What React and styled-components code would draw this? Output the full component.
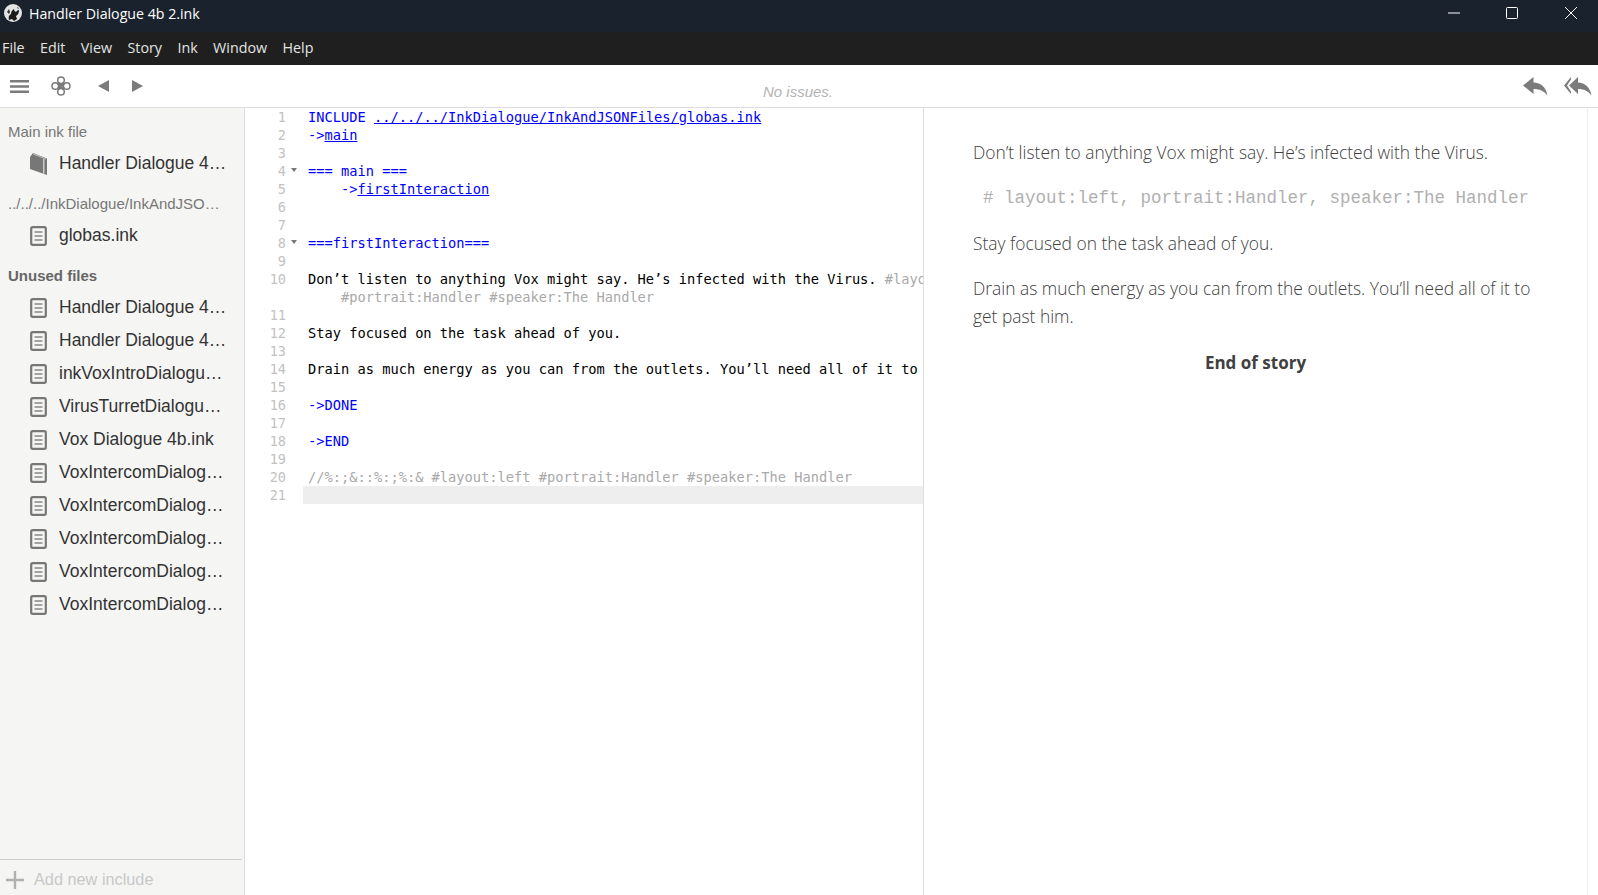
import React from 'react';
import styled, { createGlobalStyle } from 'styled-components';

const GlobalStyle = createGlobalStyle`
  html, body {
    margin: 0;
    height: 100%;
    overflow: hidden;
    background: #fff;
  }
  #root {
    height: 100%;
  }
`;

const Page = styled.div`
  display: flex;
  flex-direction: column;
  height: 895px;
  font-family: "Liberation Sans", Arial, sans-serif;
`;

const TitleBar = styled.div`
  display: flex;
  align-items: center;
  flex: 0 0 32px;
  box-sizing: border-box;
  padding-bottom: 6px;
  background: #1a222e;
  color: #fff;
  font-family: "Open Sans", sans-serif;
  font-size: 14.2px;
`;

const AppLogo = styled.svg`
  width: 18px;
  height: 18px;
  margin: 0 7px 0 4px;
`;

const WindowTitle = styled.span`
  flex: 1;
`;

const WindowButton = styled.div`
  display: flex;
  align-items: center;
  justify-content: center;
  box-sizing: border-box;
  width: 58px;
  padding-left: ${(p) => p.$nudge}px;
`;

const MenuBar = styled.div`
  display: flex;
  align-items: center;
  gap: 15.4px;
  flex: 0 0 33px;
  box-sizing: border-box;
  padding: 0 0 2px 2px;
  background: #1f1f1f;
  color: #e4e4e4;
  font-family: "Open Sans", sans-serif;
  font-size: 14.3px;
`;

const Toolbar = styled.div`
  display: flex;
  align-items: center;
  flex: 0 0 42px;
  background: #fff;
  border-bottom: 1px solid #dddddd;
`;

const ToolLeft = styled.div`
  display: flex;
  align-items: center;
  flex: 1 1 0;
  padding-left: 10px;
`;

const ToolButton = styled.svg`
  display: block;
  margin-right: ${(p) => p.$gap || 0}px;
  fill: #7b7b7b;
`;

const KnotIcon = styled.svg`
  display: block;
  margin-right: ${(p) => p.$gap}px;
  fill: none;
  stroke: #7b7b7b;
  stroke-width: 1.5;
`;

const Issues = styled.div`
  padding: 10px 6px 0 0;
  text-align: center;
  color: #b3b3b3;
  font-style: italic;
  font-size: 15px;
`;

const ToolRight = styled.div`
  display: flex;
  align-items: center;
  justify-content: flex-end;
  flex: 1 1 0;
  gap: 16px;
  padding-right: 6px;
`;

const Main = styled.div`
  display: flex;
  flex: 1;
  min-height: 0;
`;

const Sidebar = styled.aside`
  display: flex;
  flex-direction: column;
  flex: 0 0 244px;
  background: #f5f5f4;
  border-right: 1px solid #dddddd;
`;

const FileGroups = styled.div`
  flex: 1;
  padding-top: 15px;
`;

const GroupTitle = styled.div`
  height: 18px;
  line-height: 18px;
  margin: ${(p) => p.$top || 0}px 0 6px 8px;
  width: 213px;
  overflow: hidden;
  white-space: nowrap;
  text-overflow: ellipsis;
  color: ${(p) => (p.$strong ? '#666' : '#777')};
  font-weight: ${(p) => (p.$strong ? 700 : 400)};
  font-size: 15px;
`;

const FileRow = styled.div`
  display: flex;
  align-items: center;
  height: 33px;
  padding-left: 30px;
  color: #333;
  font-size: 17.5px;
`;

const FileIcon = styled.svg`
  flex: 0 0 17px;
  width: 17px;
  height: ${(p) => p.$tall ? 22 : 20}px;
  margin-right: 12px;
`;

const FileName = styled.span`
  width: 169px;
  overflow: hidden;
  white-space: nowrap;
  text-overflow: ellipsis;
`;

const AddInclude = styled.div`
  display: flex;
  align-items: center;
  flex: 0 0 36px;
  box-sizing: border-box;
  padding-top: 4px;
  margin-right: 2px;
  border-top: 1px solid #cccccc;
  color: #c8c8c8;
  font-size: 16.3px;
`;

const PlusIcon = styled.svg`
  width: 18px;
  height: 18px;
  margin: 0 10px 0 6px;
`;

const Editor = styled.section`
  flex: 0 0 678px;
  overflow: hidden;
  background: #fff;
  border-right: 1px solid #dddddd;
  font-family: "DejaVu Sans Mono", monospace;
  font-size: 13.7px;
`;

const Line = styled.div`
  display: flex;
  height: 18px;
  line-height: 18px;
  white-space: pre;
`;

const LineNumber = styled.div`
  flex: 0 0 41px;
  text-align: right;
  color: #c2c2c2;
  font-size: 13.6px;
`;

const FoldMark = styled.div`
  flex: 0 0 17px;
  display: flex;
  align-items: center;
  padding-left: 5px;
  box-sizing: border-box;

  &::after {
    content: '';
    display: ${(p) => (p.$on ? 'block' : 'none')};
    margin-top: -3px;
    border-left: 3.5px solid transparent;
    border-right: 3.5px solid transparent;
    border-top: 4px solid #777;
  }
`;

const LineText = styled.div`
  flex: 1;
  padding-left: 5px;
  overflow: hidden;
  color: #000;
  background: ${(p) => (p.$active ? '#eeeeee' : 'transparent')};
`;

const Blue = styled.span`
  color: #0000ff;
`;

const Linked = styled.span`
  color: #0000ff;
  text-decoration: underline;
`;

const Tag = styled.span`
  color: #a9a9a9;
`;

const Player = styled.section`
  flex: 1;
  position: relative;
  padding: 30px 60px 0 49px;
  background: #fff;
  color: #404040;
  font-family: "Open Sans", sans-serif;
  font-weight: 300;
  font-size: 17.4px;
  line-height: 28.5px;

  &::after {
    content: '';
    position: absolute;
    top: 0;
    bottom: 0;
    right: 10px;
    width: 1px;
    background: #efefef;
  }
`;

const StoryText = styled.p`
  margin: 0 0 ${(p) => p.$bottom || 16}px;
`;

const StoryTag = styled.p`
  margin: 0 0 17px;
  padding-left: 10px;
  color: #b0b0b0;
  font-family: "Liberation Mono", monospace;
  font-weight: 400;
  font-size: 17.5px;
  white-space: nowrap;
`;

const StoryEnd = styled.p`
  margin: 0;
  text-align: center;
  font-weight: 700;
  font-size: 17px;
`;

const mainFiles = [
  'Handler Dialogue 4b 2.ink',
];

const unusedFiles = [
  'Handler Dialogue 4b 1.ink',
  'Handler Dialogue 4b 3.ink',
  'inkVoxIntroDialogue 4b.ink',
  'VirusTurretDialogue 4b.ink',
  'Vox Dialogue 4b.ink',
  'VoxIntercomDialogue 1.ink',
  'VoxIntercomDialogue 2.ink',
  'VoxIntercomDialogue 3.ink',
  'VoxIntercomDialogue 4.ink',
  'VoxIntercomDialogue 5.ink',
];

const codeLines = [
  { n: 1, text: <Blue>INCLUDE <Linked>../../../InkDialogue/InkAndJSONFiles/globas.ink</Linked></Blue> },
  { n: 2, text: <Blue>-&gt;<Linked>main</Linked></Blue> },
  { n: 3 },
  { n: 4, fold: true, text: <Blue>=== main ===</Blue> },
  { n: 5, text: <Blue>    -&gt;<Linked>firstInteraction</Linked></Blue> },
  { n: 6 },
  { n: 7 },
  { n: 8, fold: true, text: <Blue>===firstInteraction===</Blue> },
  { n: 9 },
  { n: 10, text: <>Don’t listen to anything Vox might say. He’s infected with the Virus. <Tag>#layout:left</Tag></> },
  { text: <Tag>    #portrait:Handler #speaker:The Handler</Tag> },
  { n: 11 },
  { n: 12, text: 'Stay focused on the task ahead of you.' },
  { n: 13 },
  { n: 14, text: 'Drain as much energy as you can from the outlets. You’ll need all of it to get past him.' },
  { n: 15 },
  { n: 16, text: <Blue>-&gt;DONE</Blue> },
  { n: 17 },
  { n: 18, text: <Blue>-&gt;END</Blue> },
  { n: 19 },
  { n: 20, text: <Tag>//%:;&amp;::%:;%:&amp; #layout:left #portrait:Handler #speaker:The Handler</Tag> },
  { n: 21, active: true },
];

const Logo = () => (
  <AppLogo viewBox="0 0 18 18">
    <circle cx="9" cy="9" r="9" fill="#e4e4e4" />
    <path d="M5 16c-1-3 0-5 2-6 0-2 1-4 3-5 0 2 1 2 2 3 1-1 1-2 3-2 0 3-1 5-3 6 0 1 1 2 1 3l-3 2-2-2-3 1z" fill="#1c1c1c" />
    <path d="M3 8l2-3 1 3-1 2zM13 3l2 1-1 1z" fill="#333" />
  </AppLogo>
);

const SourceIcon = () => (
  <FileIcon viewBox="0 0 17 20">
    <rect x="1.2" y="1.2" width="14.6" height="17.6" rx="1.5" fill="none" stroke="#777" strokeWidth="2.2" />
    <path d="M4.5 6h8M4.5 10h8M4.5 14h8" stroke="#888" strokeWidth="1.7" />
  </FileIcon>
);

const BookIcon = () => (
  <FileIcon $tall viewBox="0 0 17 22">
    <path d="M0 4L3 0 17 5.5V22L0 16z" fill="#777" />
    <path d="M3.2 1L16 6" stroke="#c4c4c4" strokeWidth="1" />
    <path d="M13.8 6v14.6" stroke="#f2f2f2" strokeWidth="1" />
  </FileIcon>
);

const File = ({ name, book }) => (
  <FileRow>
    {book ? <BookIcon /> : <SourceIcon />}
    <FileName>{name}</FileName>
  </FileRow>
);

const App = () => (
  <Page>
    <GlobalStyle />
    <TitleBar>
      <Logo />
      <WindowTitle>Handler Dialogue 4b 2.ink</WindowTitle>
      <WindowButton $nudge={2}>
        <svg width="12" height="2" viewBox="0 0 12 2"><path d="M0 1h12" stroke="#fff" /></svg>
      </WindowButton>
      <WindowButton $nudge={2}>
        <svg width="12" height="12" viewBox="0 0 12 12"><rect x=".5" y=".5" width="11" height="11" rx="1" fill="none" stroke="#fff" /></svg>
      </WindowButton>
      <WindowButton $nudge={4}>
        <svg width="12" height="12" viewBox="0 0 12 12"><path d="M0 0l12 12M12 0L0 12" stroke="#fff" /></svg>
      </WindowButton>
    </TitleBar>
    <MenuBar>
      {['File', 'Edit', 'View', 'Story', 'Ink', 'Window', 'Help'].map((item) => (
        <span key={item}>{item}</span>
      ))}
    </MenuBar>
    <Toolbar>
      <ToolLeft>
        <ToolButton $gap={22} width="19" height="13" viewBox="0 0 19 13">
          <path d="M0 0h19v2.6H0zM0 5.2h19v2.6H0zM0 10.4h19V13H0z" />
        </ToolButton>
        <KnotIcon $gap={27} width="20" height="20" viewBox="0 0 20 20">
          <circle cx="10" cy="4.3" r="3.3" />
          <circle cx="15.7" cy="10" r="3.3" />
          <circle cx="10" cy="15.7" r="3.3" />
          <circle cx="4.3" cy="10" r="3.3" />
          <path d="M7.66 6.63l5.71 5.7M12.34 6.63l-5.71 5.7M7.66 13.37l5.71-5.7M12.34 13.37l-5.71-5.7" />
        </KnotIcon>
        <ToolButton $gap={23} width="11" height="12" viewBox="0 0 11 12">
          <path d="M11 0v12L0 6z" />
        </ToolButton>
        <ToolButton width="11" height="12" viewBox="0 0 11 12">
          <path d="M0 0v12l11-6z" />
        </ToolButton>
      </ToolLeft>
      <Issues>No issues.</Issues>
      <ToolRight>
        <ToolButton width="25" height="19" viewBox="0 0 25 19">
          <path d="M0 8.5L10.5 0v5.5C18 6 23 10 24.5 18.5 21 14 16.5 12 10.5 12v5z" />
        </ToolButton>
        <ToolButton width="28" height="19" viewBox="0 0 28 19">
          <path d="M7 0L0 8.5 7 17v-2.5L3 8.5l4-6z" />
          <path d="M5 8.5L14 0v5.5C21 6 26 10 27.5 18.5 24 14 20 12 14 12v5z" />
        </ToolButton>
      </ToolRight>
    </Toolbar>
    <Main>
      <Sidebar>
        <FileGroups>
          <GroupTitle>Main ink file</GroupTitle>
          {mainFiles.map((name) => <File key={name} name={name} book />)}
          <GroupTitle $top={15}>../../../InkDialogue/InkAndJSONFiles</GroupTitle>
          <File name="globas.ink" />
          <GroupTitle $top={15} $strong>Unused files</GroupTitle>
          {unusedFiles.map((name) => <File key={name} name={name} />)}
        </FileGroups>
        <AddInclude>
          <PlusIcon viewBox="0 0 18 18">
            <path d="M0 9h18M9 0v18" stroke="#b0b0b0" strokeWidth="2.4" />
          </PlusIcon>
          Add new include
        </AddInclude>
      </Sidebar>
      <Editor>
        {codeLines.map((line, i) => (
          <Line key={i}>
            <LineNumber>{line.n}</LineNumber>
            <FoldMark $on={line.fold} />
            <LineText $active={line.active}>{line.text}</LineText>
          </Line>
        ))}
      </Editor>
      <Player>
        <StoryText $bottom={17}>Don’t listen to anything Vox might say. He’s infected with the Virus.</StoryText>
        <StoryTag># layout:left, portrait:Handler, speaker:The Handler</StoryTag>
        <StoryText>Stay focused on the task ahead of you.</StoryText>
        <StoryText $bottom={18}>Drain as much energy as you can from the outlets. You’ll need all of it to get past him.</StoryText>
        <StoryEnd>End of story</StoryEnd>
      </Player>
    </Main>
  </Page>
);

export default App;
